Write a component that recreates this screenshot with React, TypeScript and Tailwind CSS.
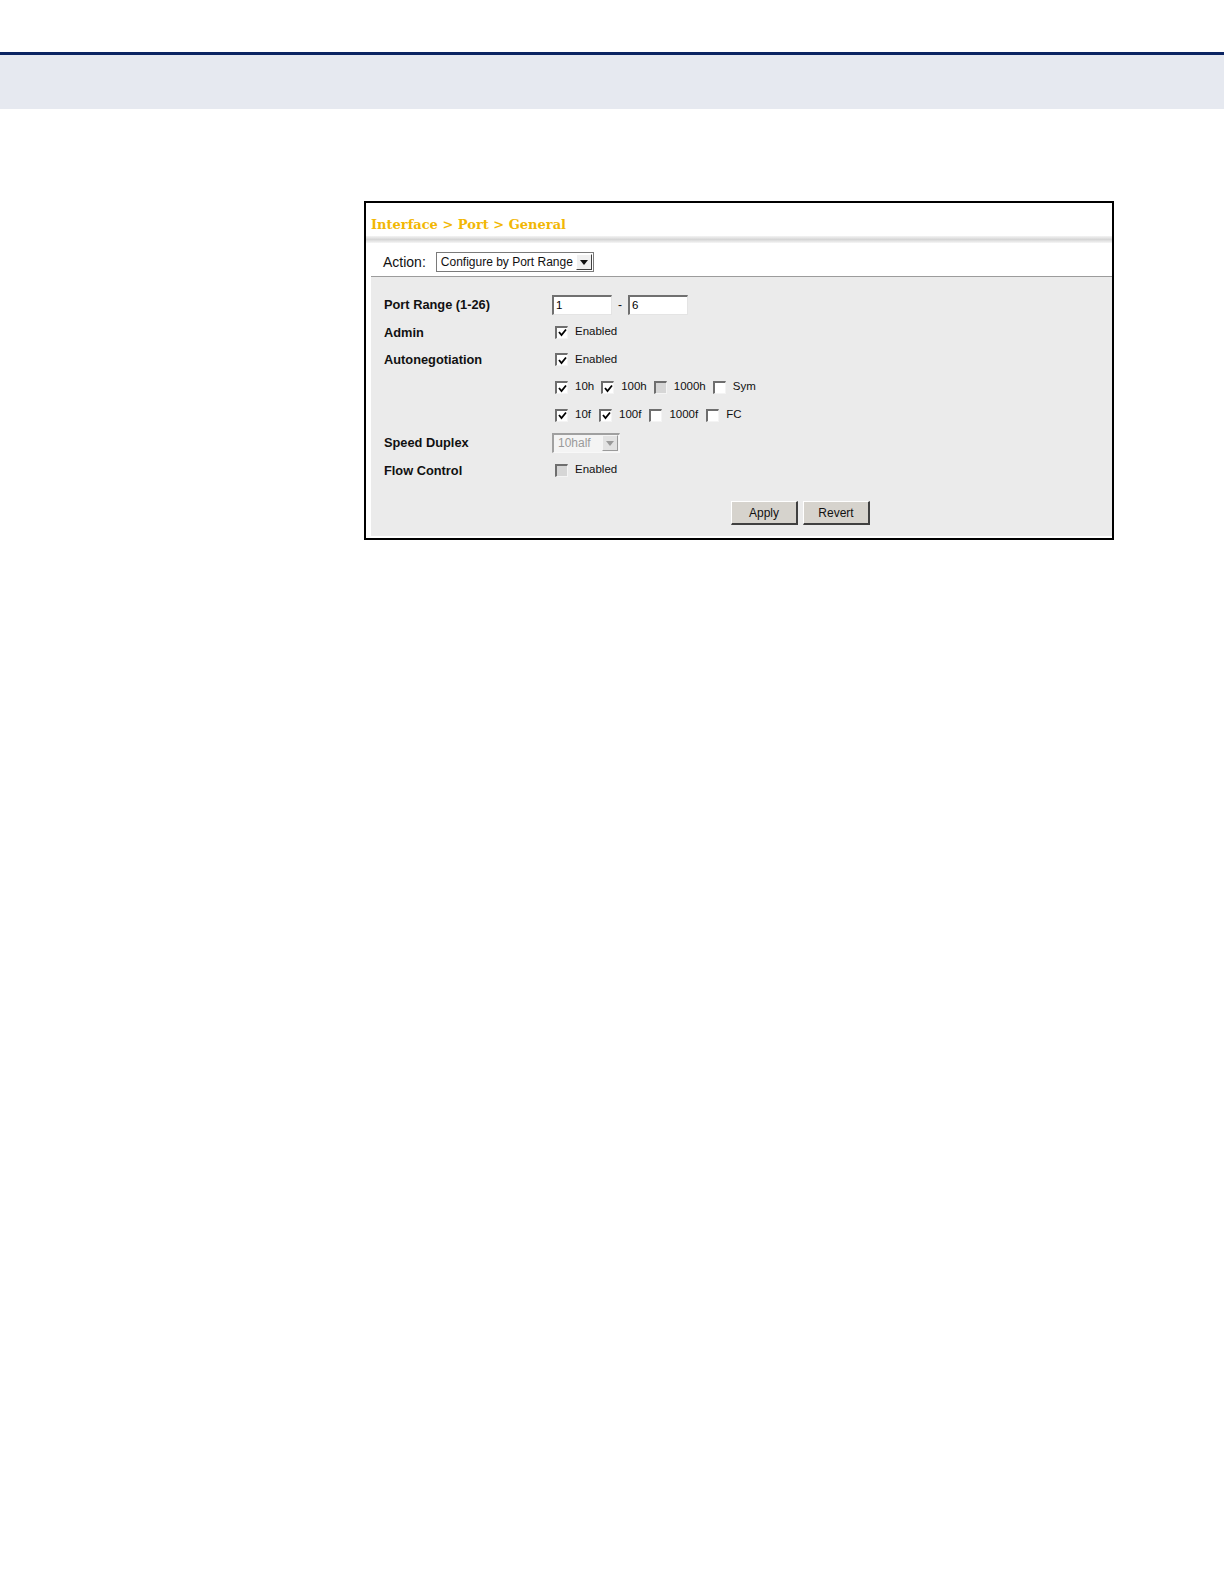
import React from "react";

function Check({ checked = false, disabled = false }: { checked?: boolean; disabled?: boolean }) {
  return (
    <span
      className={
        "inline-flex items-center justify-center w-[13px] h-[13px] shrink-0 border-t-2 border-l-2 border-b border-r border-t-[#6e6e6e] border-l-[#6e6e6e] border-b-[#f4f4f4] border-r-[#f4f4f4] " +
        (disabled ? "bg-[#d6d6d6]" : "bg-white")
      }
    >
      {checked && (
        <svg width="9" height="9" viewBox="0 0 9 9">
          <path d="M1 4 L3.5 7 L8 1.5" fill="none" stroke="#000" strokeWidth="1.8" />
        </svg>
      )}
    </span>
  );
}

function Arrow({ disabled = false }: { disabled?: boolean }) {
  return (
    <span
      className={
        "flex items-center justify-center w-[16px] h-[16px] border-t border-l border-b border-r " +
        (disabled
          ? "bg-[#e2e2e2] border-t-[#f5f5f5] border-l-[#f5f5f5] border-b-[#9a9a9a] border-r-[#9a9a9a]"
          : "bg-[#f0f0f0] border-t-[#ffffff] border-l-[#ffffff] border-b-[#404040] border-r-[#404040]")
      }
    >
      <svg width="8" height="5" viewBox="0 0 8 5">
        <path d="M0 0 L8 0 L4 5 Z" fill={disabled ? "#9a9a9a" : "#111"} />
      </svg>
    </span>
  );
}

function TextInput({ value }: { value: string }) {
  return (
    <span className="flex items-center w-[60px] h-[20px] bg-white border-t-2 border-l-2 border-b border-r border-t-[#707070] border-l-[#707070] border-b-[#e4e4e4] border-r-[#e4e4e4] pl-[2px] text-[11.5px] text-black">
      {value}
    </span>
  );
}

function Row({ label, children }: { label?: string; children?: React.ReactNode }) {
  return (
    <div className="flex items-center h-[27.6px]">
      <div className="w-[168px] shrink-0 font-bold text-[12.8px] text-[#111]">{label}</div>
      <div className="flex items-center">{children}</div>
    </div>
  );
}

function Btn({ label }: { label: string }) {
  return (
    <button className="w-[67px] h-[24px] bg-[#d6d3cd] border-t border-l border-b-2 border-r-2 border-t-[#ffffff] border-l-[#ffffff] border-b-[#404040] border-r-[#404040] text-[12px] text-[#111] flex items-center justify-center">
      {label}
    </button>
  );
}

function Opt({
  checked = false,
  disabled = false,
  label,
  first = false,
  wide = false,
}: {
  checked?: boolean;
  disabled?: boolean;
  label: string;
  first?: boolean;
  wide?: boolean;
}) {
  return (
    <span className={"flex items-center " + (first ? "ml-[3px]" : wide ? "ml-[8px]" : "ml-[7px]")}>
      <Check checked={checked} disabled={disabled} />
      <span className="ml-[7px] text-[11.5px] text-[#111] -mt-[1px]">{label}</span>
    </span>
  );
}

export default function App() {
  return (
    <div className="w-[1224px] h-[1584px] bg-white" style={{ fontFamily: '"Liberation Sans", Arial, sans-serif' }}>
      <div className="pt-[52px]">
        <div className="h-[3px] bg-[#0b2462]" />
        <div className="h-[54px] bg-[#e6e9f0]" />
      </div>

      <div className="ml-[364px] mt-[92px] w-[750px] h-[339px] border-2 border-black bg-white flex flex-col">
        <div className="h-[33px] flex items-end pl-[5px] pb-[5px]">
          <span
            className="font-bold text-[13px] text-[#f2b705] leading-none"
            style={{ fontFamily: '"DejaVu Serif", "Liberation Serif", serif' }}
          >
            Interface &gt; Port &gt; General
          </span>
        </div>
        <div className="h-[7px] bg-gradient-to-b from-[#f4f4f4] via-[#d6d6d6] to-[#f6f6f6]" />
        <div className="flex-1 flex flex-col pl-[5px] pb-[2px]">
          <div className="h-[34px] pt-[5px] flex items-center pl-[12px] border-b border-b-[#9c9c9c]">
            <span className="text-[14px] text-[#111] mr-[10px]">Action:</span>
            <span className="flex items-center justify-between w-[158px] h-[20px] bg-white border border-[#7a7a7a] pl-[4px] pr-[1px]">
              <span className="text-[12px] text-[#111]">Configure by Port Range</span>
              <Arrow />
            </span>
          </div>
          <div className="flex-1 bg-[#ebebeb] pl-[13px] pt-[14px]">
            <Row label="Port Range (1-26)">
              <TextInput value="1" />
              <span className="mx-[6px] text-[12px] text-[#111]">-</span>
              <TextInput value="6" />
            </Row>
            <Row label="Admin">
              <Opt first checked label="Enabled" />
            </Row>
            <Row label="Autonegotiation">
              <Opt first checked label="Enabled" />
            </Row>
            <Row>
              <Opt first checked label="10h" />
              <Opt checked label="100h" />
              <Opt disabled label="1000h" />
              <Opt label="Sym" />
            </Row>
            <Row>
              <Opt first checked label="10f" />
              <Opt wide checked label="100f" />
              <Opt wide label="1000f" />
              <Opt wide label="FC" />
            </Row>
            <Row label="Speed Duplex">
              <span className="flex items-center justify-between w-[68px] h-[20px] bg-[#f4f4f4] border-t-2 border-l-2 border-b border-r border-t-[#a0a0a0] border-l-[#a0a0a0] border-b-[#f8f8f8] border-r-[#f8f8f8] pl-[4px] pr-[1px]">
                <span className="text-[12px] text-[#9a9a9a]">10half</span>
                <Arrow disabled />
              </span>
            </Row>
            <Row label="Flow Control">
              <Opt first disabled label="Enabled" />
            </Row>
            <div className="flex gap-[5px] ml-[347px] mt-[17px]">
              <Btn label="Apply" />
              <Btn label="Revert" />
            </div>
          </div>
        </div>
      </div>
    </div>
  );
}
